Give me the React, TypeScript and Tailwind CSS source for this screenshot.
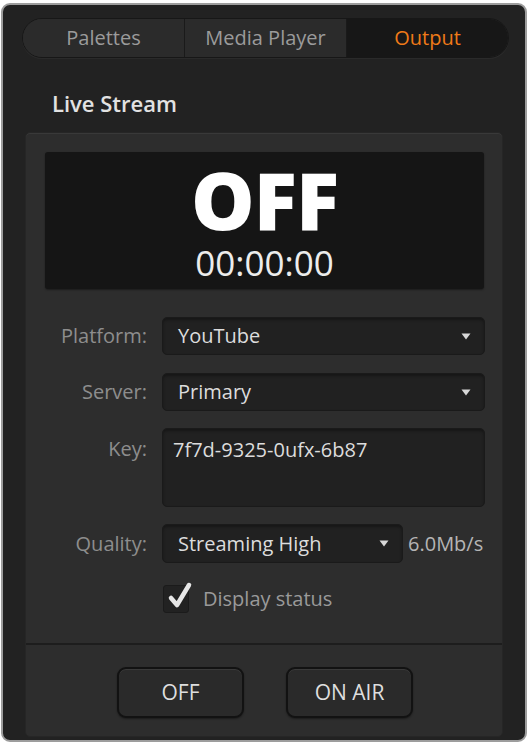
import { useState } from "react";

const font = { fontFamily: '"Open Sans", "Liberation Sans", sans-serif' };

const Arrow = () => (
  <svg width="10" height="7" viewBox="0 0 10 7" className="shrink-0">
    <path d="M0.5 0.5 H9.5 L5 6.5 Z" fill="#d8d8d8" />
  </svg>
);

type SelectProps = { value: string; className?: string };

const Select = ({ value, className = "" }: SelectProps) => (
  <div
    className={`flex items-center justify-between h-[38px] pl-[15px] pr-[13px] rounded-[5px] bg-[#212121] border border-[#1a1a1a] shadow-[inset_0_2px_3px_rgba(0,0,0,0.35)] ${className}`}
  >
    <span className="text-[20px] text-[#dcdcdc]">{value}</span>
    <Arrow />
  </div>
);

const Label = ({ children }: { children: string }) => (
  <div className="text-right text-[20px] text-[#8d8d8d]">{children}</div>
);

const App = () => {
  const [tab, setTab] = useState("Output");
  const [showStatus, setShowStatus] = useState(true);
  const tabs = ["Palettes", "Media Player", "Output"];

  return (
    <div className="w-[529px] h-[746px] bg-white pt-[3px] pl-[1px]" style={font}>
      <div className="w-[526px] h-[739px] rounded-[9px] border-2 border-[#9d9d9d] bg-[#222222] flex flex-col">
        {/* tabs */}
        <div className="mt-[13px] ml-[19px] w-[487px] h-[40px] rounded-full border border-[#171717] bg-[#2a2a2a] flex overflow-hidden shadow-[0_1px_0_rgba(255,255,255,0.04)]">
          {tabs.map((t, i) => (
            <button
              key={t}
              onClick={() => setTab(t)}
              className={`flex-1 flex items-center justify-center text-[20px] font-medium ${
                i > 0 ? "border-l border-[#1a1a1a]" : ""
              } ${
                tab === t
                  ? "bg-[#171717] text-[#f07a18]"
                  : "bg-[#2b2b2b] text-[#9b9b9b]"
              }`}
            >
              {t}
            </button>
          ))}
        </div>

        <div className="mt-[31px] ml-[49px] text-[22px] font-semibold text-[#e2e2e2] leading-[28px]">
          Live Stream
        </div>

        {/* inner panel */}
        <div className="mt-[15px] ml-[22px] w-[478px] flex-1 mb-[3px] rounded-[5px] bg-[#2d2d2d] border border-[#262626] shadow-[inset_0_1px_0_rgba(255,255,255,0.06)] flex flex-col">
          <div className="mt-[19px] ml-[19px] w-[439px] h-[137px] rounded-[3px] bg-[#151515] shadow-[0_1px_2px_rgba(0,0,0,0.4)] flex flex-col items-center">
            <div className="mt-[16px] text-[80px] font-extrabold leading-[62px] text-white tracking-[-1px]">
              OFF
            </div>
            <div className="mt-[13px] text-[35px] leading-[40px] text-[#ececec]">
              00:00:00
            </div>
          </div>

          <div className="mt-[28px] grid grid-cols-[121px_1fr] gap-x-[15px] items-center pr-[17px]">
            <Label>Platform:</Label>
            <Select value="YouTube" />

            <div className="col-span-2 h-[18px]" />

            <Label>Server:</Label>
            <Select value="Primary" />

            <div className="col-span-2 h-[17px]" />

            <div className="self-start pt-[6px]">
              <Label>Key:</Label>
            </div>
            <div className="h-[79px] rounded-[5px] bg-[#212121] border border-[#1a1a1a] shadow-[inset_0_2px_3px_rgba(0,0,0,0.35)] px-[10px] pt-[6px] text-[20px] text-[#dcdcdc]">
              7f7d-9325-0ufx-6b87
            </div>

            <div className="col-span-2 h-[17px]" />

            <Label>Quality:</Label>
            <div className="flex items-center gap-[5px]">
              <Select value="Streaming High" className="w-[241px] h-[39px]" />
              <span className="text-[20px] text-[#b5b5b5]">6.0Mb/s</span>
            </div>
          </div>

          <div className="mt-[21px] ml-[137px] flex items-center gap-[14px]">
            <button
              onClick={() => setShowStatus(!showStatus)}
              className="relative w-[26px] h-[28px] rounded-[3px] bg-[#222] border border-[#1b1b1b]"
            >
              {showStatus && (
                <svg
                  width="28"
                  height="30"
                  viewBox="0 0 28 30"
                  className="absolute left-[2px] top-[-6px]"
                >
                  <path
                    d="M5 18 L11 25 L23 5"
                    fill="none"
                    stroke="#e6e6e6"
                    strokeWidth="4.5"
                    strokeLinecap="round"
                    strokeLinejoin="round"
                  />
                </svg>
              )}
            </button>
            <span className="text-[20px] text-[#9a9a9a]">Display status</span>
          </div>

          <div className="mt-[29px] border-t-2 border-[#1d1d1d]" />

          <div className="flex-1 flex justify-center items-start gap-[42px] pt-[22px] pl-[2px]">
            {["OFF", "ON AIR"].map((b) => (
              <button
                key={b}
                className="w-[127px] h-[51px] rounded-[9px] border-2 border-[#121212] bg-[#2a2a2a] shadow-[inset_0_1px_0_rgba(255,255,255,0.08),0_1px_2px_rgba(0,0,0,0.4)] text-[21px] text-[#dedede]"
              >
                {b}
              </button>
            ))}
          </div>
        </div>
      </div>
    </div>
  );
};

export default App;
